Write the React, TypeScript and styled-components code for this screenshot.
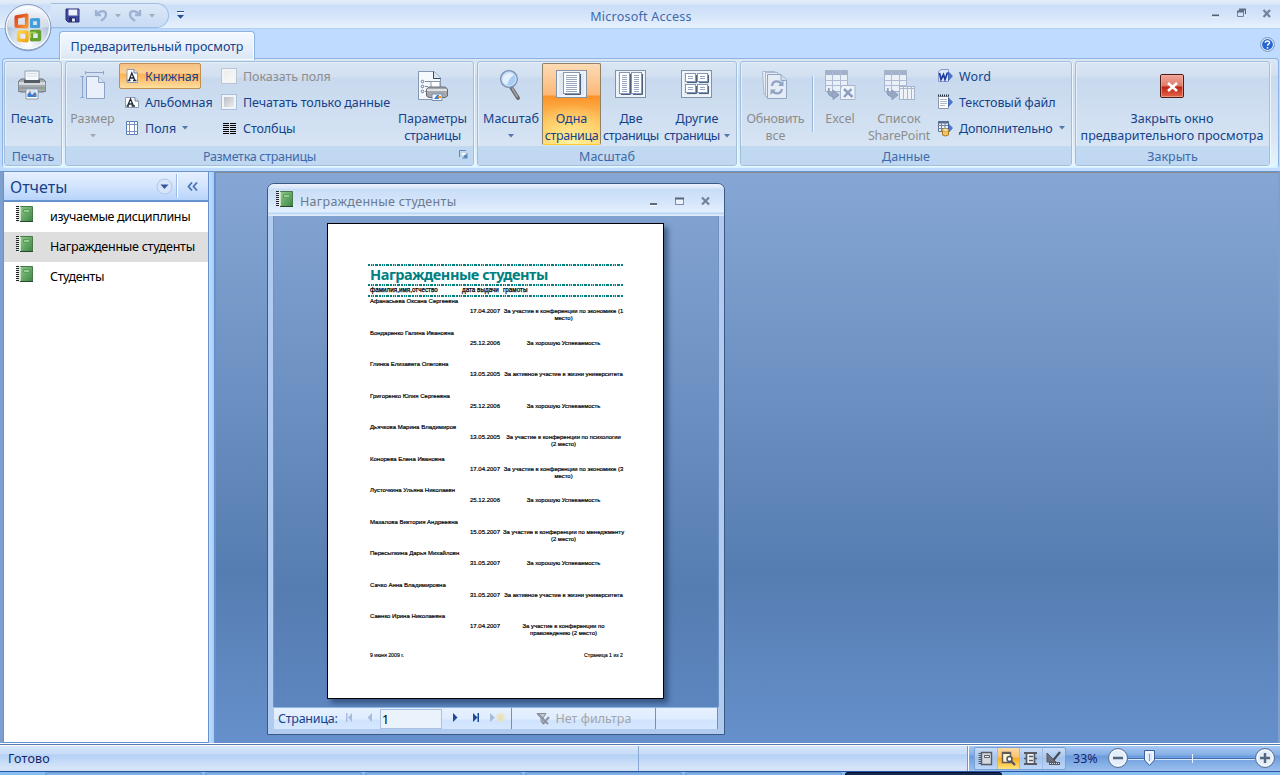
import React from "react";
import styled, { createGlobalStyle } from "styled-components";

const Global = createGlobalStyle`
  * { box-sizing: border-box; }
  body { margin: 0; overflow: hidden; font-family: "Noto Sans", "Open Sans", sans-serif; font-size: 12px; color: #15428b; }
  svg { display: block; flex: none; }
`;

const Screen = styled.div`
  width: 1280px; height: 775px; display: flex; flex-direction: column; position: relative;
  background: #bfdbff; overflow: hidden;
`;

/* Title bar */
const TitleBar = styled.header`
  height: 29px; flex: none; display: flex; align-items: stretch;
  background: linear-gradient(#e4edf9 0, #dbe7f7 4px, #cadef7 5px, #d3e3f9 14px, #e6f0fd 27px);
  border-bottom: 1px solid #b0d0fa;
`;
const QuickBar = styled.div`
  width: 118px; height: 25px; margin: 3px 0 0 51px; display: flex; align-items: center; padding-left: 14px; gap: 7px;
  border: 1px solid #9dbde4; border-left: 0; border-radius: 0 13px 13px 0;
  background: linear-gradient(#dce8f8, #c7dbf4);
`;
const QuickMore = styled.div` width: 24px; padding: 11px 0 0 8px; `;
const AppTitle = styled.h1`
  margin: 0; flex: 1; text-align: center; font-size: 12.5px; font-weight: 400; line-height: 33px;
  color: #3e6aaa; padding-right: 99px; letter-spacing: .25px;
`;
const WinButtons = styled.div` width: 92px; padding: 6px 0 0 23px; `;
const Orb = styled.div` position: absolute; left: 3px; top: 2px; `;

/* Tabs */
const TabStrip = styled.nav`
  height: 30px; flex: none; display: flex; justify-content: space-between; padding: 2px 5px 0 59px;
`;
const Tab = styled.div`
  width: 196px; height: 29px; border: 1px solid #8db2e3; border-bottom: 0; border-radius: 4px 4px 0 0;
  background: linear-gradient(#f5f9fe, #e6effa 60%, #dbe6f4); box-shadow: inset 0 0 0 1px #f8fdff;
  text-align: center; line-height: 29px; font-size: 12.5px; letter-spacing: -.07px; position: relative; z-index: 1;
`;
const HelpSlot = styled.div` padding-top: 6px; `;

/* Ribbon */
const Ribbon = styled.section`
  height: 110px; flex: none; margin: -1px 1px 0 2px; padding: 2px 0 0 1px; display: flex; gap: 3px;
  border: 1px solid #8db2e3; border-radius: 4px; border-bottom: 2px solid #d4f4ff;
  background: linear-gradient(#dce7f5 0, #d2e0f2 16px, #c9d9ee 17px, #d9e7f6 75%, #e2f6fd);
`;
const GroupBox = styled.div<{ $w: number }>`
  width: ${p => p.$w}px; height: 105px; flex: none; display: flex; flex-direction: column;
  border: 1px solid #a1bfdb; border-radius: 3px; box-shadow: 1px 1px 0 #eef7ff, inset 1px 1px 0 #e5eff9;
  background: linear-gradient(#dbe6f4 0, #d1dff0 15px, #c8d9ee 16px, #dae7f5);
  overflow: hidden;
`;
const GroupBody = styled.div` flex: 1; display: flex; align-items: flex-start; padding-top: 1px; `;
const GroupCaption = styled.div<{ $tight?: boolean }>`
  height: 19px; flex: none; text-align: center; background: linear-gradient(#c1d9f1, #bfd7f0);
  color: #3e6aaa; line-height: 21px; font-size: 12.5px; display: flex; letter-spacing: ${p => (p.$tight ? -.3 : 0)}px;
  span { flex: 1; padding-right: ${p => (p.$tight ? 6 : 0)}px; }
  svg { margin: 4px 5px 0 0; }
`;
const BigButton = styled.div<{ $w: number; $ml?: number; $off?: boolean; $active?: boolean }>`
  width: ${p => p.$w}px; margin-left: ${p => p.$ml ?? 0}px; height: 82px; flex: none;
  display: flex; flex-direction: column; align-items: center; padding-top: 7px;
  color: ${p => (p.$off ? "#8d8d8d" : "#15428b")};
  ${p => p.$active && `
    border: 1px solid #8e8165; border-bottom-color: #ffc82e; border-radius: 2px; padding-top: 6px;
    background: radial-gradient(ellipse 45px 40px at 50% 100%, #fff3a4 0, #ffe58aaa 50%, transparent 100%),
      linear-gradient(#fbdbb5 0, #feb778 31px, #fb9228 32px, #fdb24b 60%, #fed667);
  `}
`;
const BigIcon = styled.div<{ $drop?: number }>` height: 40px; flex: none; display: flex; align-items: flex-start; justify-content: center; padding-top: ${p => p.$drop ?? 0}px; `;
const BigLine = styled.div<{ $ls?: number }>`
  height: 17px; flex: none; line-height: 17px; font-size: 12.5px; white-space: nowrap; letter-spacing: ${p => p.$ls ?? 0}px;
  display: flex; align-items: center; justify-content: center; gap: 4px;
`;
const Column = styled.div<{ $w: number }>` width: ${p => p.$w}px; flex: none; `;
const SmallButton = styled.div<{ $active?: boolean; $off?: boolean; $w?: number; $gap?: number; $pad?: number; $ls?: number }>`
  height: 26px; width: ${p => (p.$w ? p.$w + "px" : "auto")}; display: flex; align-items: center; gap: ${p => p.$gap ?? 6}px;
  padding-left: ${p => p.$pad ?? 5}px; font-size: 12.5px; white-space: nowrap; letter-spacing: ${p => p.$ls ?? 0}px;
  color: ${p => (p.$off ? "#8d8d8d" : "#15428b")}; border: 1px solid transparent;
  ${p => p.$active && `border-color: #c08f4f; border-radius: 2px; background: linear-gradient(#f3c183 0, #fcd193 9px, #fdb251 10px, #fdd08a 20px, #fde0a0);`}
`;
const CheckBox = styled.div<{ $off?: boolean }>`
  width: 16px; height: 16px; flex: none; border: 1px solid ${p => (p.$off ? "#bcc5d0" : "#a9bfdf")};
  background: ${p => (p.$off ? "linear-gradient(135deg,#ebebeb,#fafafa)" : "linear-gradient(135deg,#b0b6be,#f5f5f5)")};
  box-shadow: inset 0 0 0 2px #f2f4f7;
`;
const Rule = styled.div` width: 2px; height: 56px; margin: 13px 0 0 2px; background: linear-gradient(90deg, #9ab6d8 50%, #eef6ff 50%); flex: none; `;

/* Body */
const Body = styled.main`
  height: 573px; flex: none; margin-top: 3px; display: flex; border-top: 1px solid #6d94c6; background: #7ea0d1;
  padding-left: 3px; border-bottom: 1px solid #fff;
`;
const NavPane = styled.aside`
  width: 206px; flex: none; display: flex; flex-direction: column; background: #fff;
  border: 1px solid #6593cf; border-top: 0;
`;
const NavHeader = styled.div`
  height: 30px; flex: none; display: flex; align-items: center; padding-left: 6px; font-size: 16px;
  background: linear-gradient(#e6f0ff, #d3e4fd 50%, #b8d4fb); border-bottom: 2px solid #6593cf;
  > span { width: 146px; line-height: 28px; height: 27px; }
  > i { width: 1px; height: 24px; margin: 0 10px 0 3px; background: #9cbce8; box-shadow: 1px 0 #fff; }
`;
const NavItem = styled.div<{ $on?: boolean; $ls: number }>`
  height: 30px; display: flex; padding-left: 12px; gap: 17px; font-size: 12.5px; color: #000; line-height: 29px;
  background: ${p => (p.$on ? "#dedede" : "#fff")}; white-space: nowrap; letter-spacing: ${p => p.$ls}px;
  svg { margin-top: 4px; }
`;
const Splitter = styled.div` width: 6px; flex: none; background: linear-gradient(90deg, #c5dcff, #a9ccfb); border-right: 1px solid #6593cf; `;
const Workspace = styled.div`
  flex: 1; margin-right: 2px; border: solid #8b8b8b; border-width: 1px 0 0 1px; padding: 10px 0 0 51px; display: flex; align-items: flex-start;
  background: linear-gradient(#86a7d5 0, #567db1 70%, #6690cb 100%);
`;

/* Report window */
const Win = styled.section`
  width: 458px; height: 552px; display: flex; flex-direction: column; border: 1px solid #3b5a82;
  border-radius: 7px 7px 0 0; background: #b1cbf0; overflow: hidden;
`;
const WinTitle = styled.div`
  height: 32px; flex: none; display: flex; padding: 7px 14px 0 8px; gap: 7px; color: #6b7a8f; line-height: 21px; font-size: 12.5px;
  background: linear-gradient(#e9f2fd 0, #dbe8fa 4px, #c8ddf7 5px, #d5e5fa 18px, #e3effe 28px, #b0d2f7 29px, #dfeafa 31px);
  > span { flex: 1; letter-spacing: .3px; }
  svg:last-child { margin-top: 4px; }
`;
const WinBody = styled.div`
  height: 491px; margin: 0 5px; flex: none; display: flex; justify-content: center; align-items: flex-start; padding-top: 7px;
  border: solid #6e93c4; border-width: 0 1px; padding-right: 1px;
  background: linear-gradient(#81a2d1 0, #567db1 76%, #5d86bf 100%);
`;
const Paper = styled.article`
  width: 337px; height: 476px; background: #fff; border: 1px solid #000; box-shadow: 4px 4px 5px #1d365c99;
  padding: 40px 38px 0 40px; color: #000; font: 6px/7px "Liberation Sans", sans-serif;
`;
const Dots = styled.div`
  height: 2px; width: 255px;
  background: repeating-linear-gradient(90deg, #008080 0 2px, #fff 2px 3px, #008080 3px 4px, #9fd0d0 4px 5px, #008080 5px 6px, #fff 6px 7px, #008080 7px 10px, #fff 10px 11px);
`;
const ReportTitle = styled.h2`
  margin: 0; height: 18px; padding-left: 2px; font: bold 14.5px/16px "Noto Sans", sans-serif; letter-spacing: -.46px; color: #008080; white-space: nowrap;
`;
const ReportHead = styled.div`
  height: 9px; padding-left: 2px; display: flex; font-size: 6.3px; line-height: 8px; -webkit-text-stroke: 0.25px #000; white-space: nowrap;
  span:nth-child(1) { width: 92px; } span:nth-child(2) { width: 41px; }
`;
const Records = styled.div` height: 354px; padding: 1px 0 0 2px; -webkit-text-stroke: 0.2px #000; `;
const Record = styled.div` height: 31.5px; white-space: nowrap; `;
const RecordLine = styled.div` display: flex; margin-top: 3px; `;
const DateCell = styled.span` width: 30px; margin-left: 100px; flex: none; `;
const Award = styled.span` width: 127px; font-size: 5.93px; text-align: center; white-space: pre; flex: none; `;
const ReportFoot = styled.div` display: flex; justify-content: space-between; padding: 1px 2px 0 2px; font-size: 5.2px; -webkit-text-stroke: 0.15px #000; `;

const PageNav = styled.div`
  height: 22px; flex: none; margin: 0 6px; display: flex; align-items: center; font-size: 12.5px; line-height: 22px;
  background: linear-gradient(#e6f1ff 0, #e0edff 11px, #d0e3fe 12px, #d6e7ff); border-top: 1px solid #8fb3e2; border-right: 1px solid #6593cf;
`;
const PageLabel = styled.span` padding-left: 4px; width: 70px; white-space: nowrap; letter-spacing: -.25px; `;
const PageInput = styled.div`
  width: 62px; height: 20px; border: 1px solid #a9c1e4; background: #eaf2fc; color: #000; padding-left: 1px; line-height: 19px; margin-right: 9px;
`;
const NoFilter = styled.div`
  width: 145px; height: 21px; border: solid #6593cf; border-width: 0 1px; display: flex; align-items: center; justify-content: center; gap: 5px; color: #a5a5a5;
`;

/* Status */
const StatusBar = styled.footer`
  height: 27px; flex: none; display: flex; border-top: 1px solid #fff; border-bottom: 1px solid #2a55a4;
  background: linear-gradient(#d7e6f9 0, #c7dcf8 8px, #b3d0f5 9px, #d7e5f7 22px, #cddff6);
`;
const StatusEdge = styled.div` height: 1px; flex: none; background: #567db1; `;
const Ready = styled.div` width: 639px; padding-left: 8px; font-size: 12.5px; line-height: 26px; letter-spacing: .2px; color: #15286b; border-right: 1px solid #8aa8d4; `;
const StatusFill = styled.div` width: 329px; border-right: 1px solid #7396cb; `;
const ViewPart = styled.div`
  flex: 1; display: flex; align-items: center; padding-left: 5px; border-left: 1px solid #fff;
  background: linear-gradient(#a6c8f4 0, #86aee5 9px, #6b9bdd 10px, #9cc0ee);
`;
const ViewSet = styled.div` width: 92px; height: 23px; display: flex; border: 1px solid #7ba0d4; border-radius: 2px; background: linear-gradient(#c9dcf5, #a6c4ec 50%, #bdd7f8); `;
const ViewButton = styled.div<{ $on?: boolean }>`
  width: 22.5px; display: flex; align-items: center; justify-content: center; border-right: 1px solid #9fbce4;
  &:last-child { border: 0; }
  background: ${p => (p.$on ? "linear-gradient(#fbdba7,#f9c068 45%,#ffa913 48%,#ffe57e)" : "none")};
`;
const Percent = styled.span` width: 41px; padding-left: 7px; font-size: 12.5px; line-height: 25px; color: #15286b; `;
const TaskBar = styled.div` flex: 1; display: flex; background: #86bff0; padding-left: 45px; gap: 3px; `;
const Task = styled.div<{ $on?: boolean }>` width: 157px; flex: none; background: ${p => (p.$on ? "#15284f" : "#7fb1ea")}; border: 1px solid ${p => (p.$on ? "#05102e" : "#6f97cb")}; border-bottom: 0; border-radius: 3px 3px 0 0; `;

/* Icons */
const Caret = ({ c = "#5377ae" }: { c?: string }) => (
  <svg width="6" height="4" viewBox="0 0 6 4"><path d="M0 0H6L3 3.500Z" fill={c} /></svg>
);

const OfficeOrb = () => (
  <svg width="50" height="50" viewBox="0 0 50 50">
    <defs>
      <radialGradient id="orb" cx=".5" cy=".9" r=".9"><stop offset="0" stopColor="#fff" /><stop offset=".45" stopColor="#cfdcec" /><stop offset=".75" stopColor="#a9b9d2" /><stop offset="1" stopColor="#f4f7fb" /></radialGradient>
      <linearGradient id="orbTop" x1="0" y1="0" x2="0" y2="1"><stop offset="0" stopColor="#fff" /><stop offset="1" stopColor="#d5deeb" /></linearGradient>
      <linearGradient id="og" x1="0" y1="0" x2="1" y2="1"><stop offset="0" stopColor="#d9401b" /><stop offset="1" stopColor="#f79632" /></linearGradient>
      <linearGradient id="yg" x1="0" y1="0" x2="1" y2="1"><stop offset="0" stopColor="#fbd64b" /><stop offset="1" stopColor="#f1a51b" /></linearGradient>
    </defs>
    <circle cx="25" cy="26" r="23.2" fill="#6883ab" opacity=".6" />
    <circle cx="25" cy="25.3" r="22.8" fill="#f5f9fe" stroke="#8298b9" strokeWidth="1" />
    <circle cx="25" cy="25.3" r="20.8" fill="url(#orb)" />
    <path d="M4.500 25A20.500 20.500 0 0 1 45.500 25Q25 28 4.500 25Z" fill="url(#orbTop)" opacity=".85" />
    <g fill="none" strokeLinejoin="round" strokeWidth="3">
      <path d="M28.500 17.800L35.500 17.500V24.500H28.500Z" stroke="#3f9fdc" strokeWidth="3.200" />
      <path d="M28.500 29.500H36.500V37.500L28.500 37.800Z" stroke="#64a02e" strokeWidth="3.400" />
      <path d="M27.500 36L27.500 30.500H33" stroke="#a9cf4b" strokeWidth="1.500" />
      <path d="M15.500 30H24V38.800L15.500 38Z" stroke="url(#yg)" strokeWidth="3.400" />
      <path d="M13.300 15L23.700 13.200V24.800L13.300 24.300Z" stroke="url(#og)" strokeWidth="3.600" />
    </g>
  </svg>
);
const SaveIcon = () => (
  <svg width="15" height="15" viewBox="0 0 15 15">
    <path d="M1 1H14V14H3L1 12Z" fill="#4149a4" stroke="#252c79" />
    <path d="M3.500 1.500H12V7.500H3.500Z" fill="#eef2fa" /><path d="M12 1.500H13.500V8H12Z" fill="#7079c5" />
    <path d="M4 9.500H11V14H4Z" fill="#252b63" /><path d="M7 10.500H10V13.500H7Z" fill="#e5e9f4" />
  </svg>
);
const UndoIcon = ({ flip }: { flip?: boolean }) => (
  <svg width="14" height="13" viewBox="0 0 14 13">
    <g transform={flip ? "translate(14 0) scale(-1 1)" : undefined} fill="none" stroke="#9db2d2" strokeWidth="2.300">
      <path d="M2 1V6H7" /><path d="M2.500 5.500C6 1 12 1 12 5.500C12 9 9 10 7 12" />
    </g>
  </svg>
);
const QuickGap = styled.i` width: 0; `;
const MoreIcon = () => (
  <svg width="7" height="8" viewBox="0 0 7 8"><path d="M0 .5H7" stroke="#24508f" /><path d="M0 4H7L3.500 7.800Z" fill="#24508f" /><path d="M1 1.500H7" stroke="#fff" /></svg>
);
const AppWinIcon = () => (
  <svg width="62" height="14" viewBox="0 0 62 14">
    <path d="M1 9.500H8" stroke="#546174" strokeWidth="2" /><path d="M1 11H8" stroke="#fff" />
    <g fill="none" stroke="#73849b"><path d="M28.500 3.500H34.500V8" stroke="#506077" /><path d="M26.500 6V10.500H32.500V6" /><path d="M26 5.500H33M28 3.500H35" strokeWidth="2" stroke="#5f6e83" /></g>
    <path d="M52.500 4L59 11M59 4L52.500 11" stroke="#71839c" strokeWidth="2.200" />
  </svg>
);
const DocWinIcon = () => (
  <svg width="60" height="12" viewBox="0 0 60 12">
    <path d="M0 9H7" stroke="#5c6a7c" strokeWidth="2" /><path d="M0 10.500H7" stroke="#fff" />
    <rect x="25.500" y="3.500" width="8" height="6" fill="#eaf2fd" stroke="#7790b4" /><path d="M25 3.500H34" stroke="#56667d" strokeWidth="2" />
    <path d="M52 2.500L59 9.500M59 2.500L52 9.500" stroke="#71839c" strokeWidth="2.200" />
  </svg>
);
const HelpIcon = () => (
  <svg width="15" height="15" viewBox="0 0 15 15">
    <circle cx="7.500" cy="7.500" r="6.900" fill="#e6f1ff" stroke="#7691bd" /><circle cx="7.500" cy="7.500" r="5.400" fill="#2766d2" />
    <path d="M5.300 5.800C5.300 3.200 9.700 3.300 9.500 5.700C9.400 7.200 7.500 7 7.500 8.800" fill="none" stroke="#fff" strokeWidth="1.500" /><circle cx="7.500" cy="10.800" r=".9" fill="#fff" />
  </svg>
);
const PrintIcon = () => (
  <svg width="28" height="30" viewBox="1 2 28 30">
    <path d="M8 3H22V14H8Z" fill="#f6f9fc" stroke="#92a0af" /><path d="M10 5.500H20M10 8H20" stroke="#d4dbe3" />
    <path d="M4 11H8V13H22V11H26L29 14V23L26 24H4L1 23V14Z" fill="#a6abb2" stroke="#6e747d" />
    <path d="M2 14H28V17H2Z" fill="#d5d8dc" /><path d="M7 12H23V15H7Z" fill="#555b65" /><path d="M2 20H28" stroke="#858b93" />
    <path d="M9 21H21V31H9Z" fill="#fff" stroke="#8b98a8" /><path d="M10.500 22H19.500V29H10.500Z" fill="#d3e5fa" />
    <path d="M10.500 29V26L13 24L15 27L18 24L19.500 26V29Z" fill="#3b7bd0" /><path d="M12 24H14M17 27H19" stroke="#d66e4a" /><circle cx="25.500" cy="20" r="1" fill="#6cc04c" />
  </svg>
);
const SizeIcon = () => (
  <svg width="26" height="30" viewBox="0 0 26 30">
    <g stroke="#8ea4c7" fill="none"><path d="M5 2.500H24M5.500 1V4.500M23.500 1V4.500M2.500 6V28M.5 6.500H4M.5 27.500H4" />
    <path d="M6.500 6.500H18.500L24.500 12.500V28.500H6.500Z" fill="#e9f0fa" stroke="#8ba1c9" /><path d="M18.500 6.500V12.500H24.500" fill="#d5e0f0" /></g>
  </svg>
);
const LetterPage = ({ wide }: { wide?: boolean }) => (
  <svg width="14" height="16" viewBox="0 0 14 16">
    {wide ? <path d="M.5 3.500H10L13.500 7V13.500H.5Z" fill="#fff" stroke="#8c9bb3" /> : <path d="M2 1.500H9L12.500 5V14.500H2Z" fill="#fff" stroke="#8c9bb3" />}
    {wide ? <path d="M10 3.500V7H13.500" fill="#dde5ef" stroke="#6f7f98" /> : <path d="M9 1.500V5H12.500" fill="#dde5ef" stroke="#6f7f98" />}
    <path d={wide ? "M2.500 12L5.500 5L8.500 12M3.500 10H8M1.500 12H4M6.500 12H10" : "M4 12.500L6.800 5L10 12.500M4.500 10H9M2.500 12.500H5.500M8 12.500H11.500"} fill="none" stroke="#222b3a" strokeWidth="1.300" />
  </svg>
);
const MarginsIcon = () => (
  <svg width="14" height="16" viewBox="0 0 14 16"><path d="M1.500 1.500H12.500V14.500H1.500Z" fill="#fff" stroke="#5b7cae" /><path d="M4.500 1V15M9.500 1V15M1 4.500H13M1 11.500H13" stroke="#7291c1" /></svg>
);
const ColumnsIcon = () => (
  <svg width="14" height="12" viewBox="0 0 14 12"><path d="M1 1.500H7M8 1.500H14M1 3.500H7M8 3.500H14M1 5.500H7M8 5.500H14M1 7.500H7M8 7.500H14M1 9.500H7M8 9.500H14M1 11.500H7M8 11.500H14" stroke="#000" /></svg>
);
const PageSetupIcon = () => (
  <svg width="32" height="32" viewBox="0 0 32 32">
    <path d="M1.500 1.500H17L23.500 8V29.500H1.500Z" fill="#f5f9fe" stroke="#8397b4" /><path d="M16.500 1.500V8.500H23.500" fill="#dbe6f4" stroke="#33465f" />
    <g fill="#fff" stroke="#5c7597"><circle cx="5.500" cy="11.500" r="1.300" /><circle cx="5.500" cy="16.500" r="1.300" /><circle cx="5.500" cy="21.500" r="1.300" /></g>
    <path d="M8 11.500H14M8 16.500H11M8 21.500H9" stroke="#7b8da8" />
    <path d="M14 11.500H23V20H14Z" fill="#fff" stroke="#8a97a8" /><path d="M9.500 19L12 17H28L30.500 19V26L28 27.500H12L9.500 26Z" fill="#a4a8ae" stroke="#666d77" />
    <path d="M10 20H30" stroke="#dfe2e6" strokeWidth="2" /><path d="M15 24H25V30.500H15Z" fill="#f2f8ff" stroke="#7c8ea6" /><path d="M17 29L20 25H22V29Z" fill="#3b7bd0" /><path d="M21 27H24" stroke="#e09a40" strokeWidth="2" />
  </svg>
);
const LauncherIcon = () => (
  <svg width="9" height="9" viewBox="0 0 9 9"><path d="M.5 7V.5H7" fill="none" stroke="#5f87b7" /><path d="M8.500 3V8.500H3Z" fill="#5f87b7" /><path d="M3 3L7 7" stroke="#5f87b7" /><path d="M3 3H6V5H3Z" fill="#fff" /></svg>
);
const MagnifierIcon = () => (
  <svg width="22" height="32" viewBox="1 1 22 32">
    <path d="M12 18L19 29" stroke="#6c6a6c" strokeWidth="4" strokeLinecap="round" /><path d="M13 19L18.500 28" stroke="#a4a5a9" strokeWidth="1.500" />
    <circle cx="10" cy="10" r="8.300" fill="#a9ccf2" stroke="#8195b8" strokeWidth="1.500" /><path d="M3.500 10C4 4 12 2 15 6C12 7 9 13 8 16C5 15 3.500 13 3.500 10Z" fill="#e2f0fd" /><circle cx="10" cy="10" r="7" fill="none" stroke="#d4e6fa" />
  </svg>
);
const PagesIcon = ({ kind }: { kind: 1 | 2 | 4 }) => {
  const pages = kind === 1 ? [[8, 3, 16, 21]] : kind === 2 ? [[5, 3, 10, 21], [17, 3, 10, 21]] : [[5, 4, 10, 8], [17, 4, 10, 8], [5, 15, 10, 8], [17, 15, 10, 8]];
  return (
    <svg width="32" height="28" viewBox="0 0 32 28">
      <rect x=".5" y=".5" width="30" height="27" fill="#dfe8f3" stroke="#8292a8" /><rect x="2" y="2" width="27" height="24" fill="none" stroke="#fff" />
      {pages.map(([x, y, w, h], i) => (
        <g key={i}>
          <path d={`M${x + w + .5} ${y + 1}V${y + h + .5}H${x + 1}`} fill="none" stroke="#4c617f" />
          <rect x={x - .5} y={y - .5} width={w} height={h} fill="#fff" stroke="#8497b3" />
          {Array.from({ length: Math.floor((h - 3) / 2) }, (_, k) => <path key={k} d={`M${x + 2} ${y + 2.500 + k * 2}H${x + w - 3}`} stroke="#98a6bd" />)}
        </g>
      ))}
    </svg>
  );
};
const RefreshIcon = () => (
  <svg width="28" height="32" viewBox="1 2 28 32">
    <g fill="#e5ecf6" stroke="#a9b9d1"><path d="M1.500 3.500H14V26.500H3Z" /><path d="M4.500 4.500H17V28.500H4.500Z" /><path d="M6.500 6.500H20L25.500 12V30.500H6.500Z" stroke="#91a5c5" /></g>
    <path d="M20 6.500V12.500H25.500" fill="#d3ddeb" stroke="#91a5c5" />
    <path d="M11 18C11.500 12.500 18 12 20.500 16M21 21C20 26.500 14 26.500 11.500 23" fill="none" stroke="#8fa3c4" strokeWidth="2.300" /><path d="M22.500 12.500V18H17ZM9.500 27V21.500H15Z" fill="#8fa3c4" />
  </svg>
);
const TableExport = ({ kind }: { kind: "x" | "s" }) => (
  <svg width="32" height="33" viewBox="0 2 32 33">
    <path d="M1.500 2.500H23.500V23.500H1.500Z" fill="#eaf0f8" stroke="#a5b5cf" /><path d="M1.500 2.500H23.500V7H1.500Z" fill="#a3b1ca" /><path d="M8.500 3V23M16.500 3V23M1 12.500H24M1 17.500H24" stroke="#adbcd4" />
    <path d="M5 20C5 24 6 25 9 25V22L15 27L9 31.500V28.500C4 28 3 25 5 20Z" fill="#9aa9c3" stroke="#8496b4" />
    {kind === "x" ? <g><path d="M18.500 17.500H31V31.500H16.500V20Z" fill="#eef3fa" stroke="#a4b4cf" /><path d="M20 21L28.500 29M27.500 21L20 29" stroke="#8c9ebf" strokeWidth="2.500" /></g>
      : <g><rect x="16.500" y="18.500" width="15" height="13" fill="#eef3fa" stroke="#a4b4cf" /><path d="M16 20.500H32M20.500 19V31M24.500 19V31M28.500 19V31" stroke="#a9b8d1" /></g>}
  </svg>
);
const ExportArrow = () => <path d="M11.500 4L15.500 8L11.500 12.500Z" fill="#4b78d1" stroke="#2450a6" strokeWidth=".6" />;
const WordIcon = () => (
  <svg width="16" height="16" viewBox="0 0 16 16"><path d="M1.500 3.500L4 1.500H11.500V13.500H1.500Z" fill="#dfe8fb" stroke="#8799c9" /><path d="M2.500 5L4 11.500L6.500 6.500L8 11.500L10.500 4.500" fill="none" stroke="#1c3ca0" strokeWidth="1.700" /><ExportArrow /></svg>
);
const TextIcon = () => (
  <svg width="16" height="16" viewBox="0 0 16 16"><path d="M1.500 2.500H11.500V14.500H1.500Z" fill="#fff" stroke="#8b98ae" /><path d="M1 1.500H12" stroke="#222c3e" strokeWidth="2" strokeDasharray="1 1" /><path d="M3 5.500H10M3 7.500H10M3 9.500H10M3 11.500H8" stroke="#b0bac9" /><ExportArrow /></svg>
);
const MoreExportIcon = () => (
  <svg width="16" height="17" viewBox="0 0 16 17"><path d="M1.500 1.500H11.500V11.500H1.500Z" fill="#eef3fa" stroke="#5d718f" /><path d="M1 2.500H12" stroke="#54698a" strokeWidth="2" /><path d="M4.500 2V11M8 2V11M1 5.500H11M1 8.500H11" stroke="#6e819d" /><ExportArrow /><path d="M5.500 10V15Q8.500 17 11.500 15V10Z" fill="#f3c664" stroke="#a97722" /><ellipse cx="8.500" cy="10" rx="3" ry="1.500" fill="#ffe8ae" stroke="#b98a35" strokeWidth=".7" /></svg>
);
const CloseIcon = () => (
  <svg width="24" height="24" viewBox="0 0 24 24">
    <defs><linearGradient id="red" x1="0" y1="0" x2="0" y2="1"><stop offset="0" stopColor="#f4a79b" /><stop offset=".5" stopColor="#dc7a69" /><stop offset=".54" stopColor="#bb2512" /><stop offset="1" stopColor="#e9674d" /></linearGradient></defs>
    <rect x=".5" y=".5" width="23" height="23" rx="1.500" fill="url(#red)" stroke="#4c1c19" /><rect x="1.500" y="1.500" width="21" height="21" fill="none" stroke="#f5b3a4" opacity=".6" />
    <path d="M8 9L17 17M17 9L8 17" stroke="#fff" strokeWidth="2.600" />
  </svg>
);
const ReportIcon = () => (
  <svg width="17" height="17" viewBox="0 0 17 17">
    <defs><linearGradient id="book" x1="0" y1="0" x2="1" y2="1"><stop offset="0" stopColor="#8dcb86" /><stop offset="1" stopColor="#3d8546" /></linearGradient></defs>
    <path d="M4.500 .5H16.500V15.500H4.500Z" fill="url(#book)" stroke="#47774a" /><path d="M3.500 15.500H17" stroke="#26472a" /><path d="M7.500 3.500H13.500V6.500H7.500Z" fill="#93cd8e" stroke="#5c9a5e" />
    <path d="M2.500 0V16" stroke="#e9ecef" strokeWidth="3" /><path d="M1.500 0V16" stroke="#1f2422" strokeWidth="3" strokeDasharray="1 1" /><path d="M4.500 1V15" stroke="#cfe3ce" />
  </svg>
);
const RoundArrow = () => (
  <svg width="17" height="17" viewBox="0 0 17 17"><circle cx="8.500" cy="8.500" r="7.500" fill="#d8e5f8" stroke="#b1c6e5" /><path d="M4.500 6.500H12.500L8.500 11Z" fill="#34569c" /></svg>
);
const Chevrons = () => <svg width="11" height="9" viewBox="0 0 11 9"><path d="M5 .5L1.500 4.500L5 8.500M10 .5L6.500 4.500L10 8.500" fill="none" stroke="#4b75b4" strokeWidth="1.800" /></svg>;
const NavArrow = ({ kind }: { kind: "first" | "prev" | "next" | "last" | "new" }) => {
  const c = kind === "next" || kind === "last" ? "#1c4a97" : "#a8bddd";
  const w = kind === "prev" ? 15 : kind === "new" ? 18 : 21;
  return (
    <svg width={w} height="13" viewBox={`0 0 ${w} 13`} overflow="visible">
      {kind === "first" && <path d="M2 1H3.500V10H2ZM8 1V10L4 5.500Z" fill={c} />}
      {kind === "prev" && <path d="M7 1V10L2.500 5.500Z" fill={c} />}
      {kind === "next" && <path d="M2 1V10L6.500 5.500Z" fill={c} />}
      {kind === "last" && <path d="M1 1V10L5.500 5.500ZM5.500 1H7V10H5.500Z" fill={c} />}
      {kind === "new" && <g transform="translate(-3)"><path d="M0 1V10L5 5.500Z" fill={c} /><path d="M7 2L14 9M14 2L7 9M10.500 1V10M6 5.500H15" stroke="#eadfb5" strokeWidth="1.500" /></g>}
    </svg>
  );
};
const FilterIcon = () => (
  <svg width="15" height="14" viewBox="0 0 15 14"><path d="M1 1.500H10L7 6V12L5 9V6Z" fill="#c0c6d0" stroke="#868c98" /><path d="M2 2L12 12M13 5L7 12" stroke="#8d939f" strokeWidth="2" /></svg>
);
const ViewIcon = ({ n }: { n: number }) => (
  <svg width="15" height="15" viewBox="0 0 15 15">
    {n === 0 && <g><path d="M3.500 1.500H13.500V13.500H3.500Z" fill="#d2d8e0" stroke="#565b63" strokeWidth="1.400" /><path d="M6.500 4.500H11.500V6.500H6.500Z" fill="#fff" stroke="#565b63" /><path d="M2 2V14" stroke="#565b63" strokeWidth="3" strokeDasharray="1 1" /></g>}
    {n === 1 && <g><path d="M1.500 1.500H9.500V11.500H1.500Z" fill="#fff2d1" stroke="#635b50" strokeWidth="1.400" /><path d="M1 2H10" stroke="#635b50" strokeWidth="2" /><circle cx="8.500" cy="8" r="2.500" fill="#fff" stroke="#4d5564" strokeWidth="1.500" /><path d="M10 10L14 14" stroke="#4d5564" strokeWidth="2.200" /></g>}
    {n === 2 && <g><path d="M3 1H12V14H3Z" fill="#eef2f7" /><path d="M1 2H14M1 13H14" stroke="#565b63" strokeWidth="2" /><path d="M3.500 3V12M11.500 3V12M1 7.500H4M11 7.500H14M6 5.500H10M6 9.500H10" stroke="#565b63" strokeWidth="1.700" /></g>}
    {n === 3 && <g><path d="M1 2V11H10Z" fill="#6c7179" stroke="#565b63" /><path d="M14 1L7.500 9" stroke="#454b55" strokeWidth="2.200" /><path d="M3 12.500H14" stroke="#565b63" strokeWidth="3" /><path d="M4 12.500H13" stroke="#dbe2ec" strokeDasharray="1 1" /></g>}
  </svg>
);
const ZoomSlider = () => (
  <svg width="169" height="23" viewBox="0 0 169 23">
    <path d="M21 11.500H148" stroke="#3f6cb2" /><path d="M21 12.500H148" stroke="#d8e8fb" /><path d="M85.500 7V16" stroke="#e8f2ff" />
    {[11, 158].map(x => <g key={x}><circle cx={x} cy="11" r="9.500" fill="#c4d9f1" stroke="#5c7291" /><circle cx={x} cy="11" r="8" fill="#e3eefa" stroke="#fff" /></g>)}
    <path d="M6 11H16M153 11H163M158 6V16" stroke="#53657f" strokeWidth="2.400" />
    <path d="M37.500 3.500H47.500V13L42.500 18.500L37.500 13Z" fill="#dceafc" stroke="#3d639d" /><path d="M39 5H46V12.500L42.500 16.500L39 12.500Z" fill="none" stroke="#fff" /><path d="M42.500 7V14" stroke="#7f9cc6" />
  </svg>
);

const conf = "За участие в конференции по ";
const records: [string, string, string][] = [
  ["Афанасьева Оксана Сергеевна", "17.04.2007", conf + "экономике (1\nместо)"],
  ["Бондаренко Галина Ивановна", "25.12.2006", "За хорошую Успеваемость"],
  ["Глинка Елизавета Олеговна", "13.05.2005", "За активное участие в жизни университета"],
  ["Григоренко Юлия Сергеевна", "25.12.2006", "За хорошую Успеваемость"],
  ["Дьячкова Марина Владимиров", "13.05.2005", conf + "психологии\n(2 место)"],
  ["Конорева Елена Ивановна", "17.04.2007", conf + "экономике (3\nместо)"],
  ["Лусточкина Ульяна Николаевн", "25.12.2006", "За хорошую Успеваемость"],
  ["Мазалова Виктория Андреевна", "15.05.2007", conf + "менеджменту\n(2 место)"],
  ["Пересыпкина Дарья Михайловн", "31.05.2007", "За хорошую Успеваемость"],
  ["Сачко Анна Владимировна", "31.05.2007", "За активное участие в жизни университета"],
  ["Саенко Ирина Николаевна", "17.04.2007", "За участие в конференции по\nправоведению (2 место)"],
];

const Group = ({ w, title, launcher, children }: { w: number; title: string; launcher?: boolean; children: React.ReactNode }) => (
  <GroupBox $w={w}><GroupBody>{children}</GroupBody><GroupCaption $tight={launcher}><span>{title}</span>{launcher && <LauncherIcon />}</GroupCaption></GroupBox>
);

export default function App() {
  return (
    <Screen>
      <Global />
      <TitleBar>
        <QuickBar><SaveIcon /><QuickGap /><UndoIcon /><Caret c="#a3adba" /><UndoIcon flip /><Caret c="#a3adba" /></QuickBar>
        <QuickMore><MoreIcon /></QuickMore>
        <AppTitle>Microsoft Access</AppTitle>
        <WinButtons><AppWinIcon /></WinButtons>
      </TitleBar>
      <Orb><OfficeOrb /></Orb>
      <TabStrip><Tab>Предварительный просмотр</Tab><HelpSlot><HelpIcon /></HelpSlot></TabStrip>
      <Ribbon>
        <Group w={58} title="Печать">
          <BigButton $w={54}><BigIcon><PrintIcon /></BigIcon><BigLine>Печать</BigLine></BigButton>
        </Group>
        <Group w={409} title="Разметка страницы" launcher>
          <BigButton $w={53} $off><BigIcon><SizeIcon /></BigIcon><BigLine>Размер</BigLine><BigLine><Caret c="#a3a9b0" /></BigLine></BigButton>
          <Column $w={101}>
            <SmallButton $active $w={82} $ls={-.15}><LetterPage />Книжная</SmallButton>
            <SmallButton $ls={-.1}><LetterPage wide />Альбомная</SmallButton>
            <SmallButton><MarginsIcon />Поля<Caret /></SmallButton>
          </Column>
          <Column $w={176}>
            <SmallButton $off $pad={0} $ls={-.05}><CheckBox $off />Показать поля</SmallButton>
            <SmallButton $pad={0} $ls={-.1}><CheckBox />Печатать только данные</SmallButton>
            <SmallButton $pad={1} $gap={7} $ls={-.1}><ColumnsIcon />Столбцы</SmallButton>
          </Column>
          <BigButton $w={73}><BigIcon><PageSetupIcon /></BigIcon><BigLine $ls={-.1}>Параметры</BigLine><BigLine $ls={-.3}>страницы</BigLine></BigButton>
        </Group>
        <Group w={260} title="Масштаб">
          <BigButton $w={58} $ml={4}><BigIcon><MagnifierIcon /></BigIcon><BigLine>Масштаб</BigLine><BigLine><Caret /></BigLine></BigButton>
          <BigButton $w={59} $ml={2} $active><BigIcon><PagesIcon kind={1} /></BigIcon><BigLine>Одна</BigLine><BigLine $ls={-.4}>страница</BigLine></BigButton>
          <BigButton $w={60}><BigIcon><PagesIcon kind={2} /></BigIcon><BigLine>Две</BigLine><BigLine $ls={-.4}>страницы</BigLine></BigButton>
          <BigButton $w={72}><BigIcon><PagesIcon kind={4} /></BigIcon><BigLine>Другие</BigLine><BigLine $ls={-.4}>страницы<Caret /></BigLine></BigButton>
        </Group>
        <Group w={332} title="Данные">
          <BigButton $w={69} $off><BigIcon><RefreshIcon /></BigIcon><BigLine $ls={-.2}>Обновить</BigLine><BigLine>все</BigLine></BigButton>
          <Rule />
          <BigButton $w={52} $off><BigIcon><TableExport kind="x" /></BigIcon><BigLine>Excel</BigLine></BigButton>
          <BigButton $w={66} $off><BigIcon><TableExport kind="s" /></BigIcon><BigLine>Список</BigLine><BigLine $ls={-.2}>SharePoint</BigLine></BigButton>
          <Column $w={130}>
            <SmallButton $pad={4} $ls={.1}><WordIcon />Word</SmallButton>
            <SmallButton $pad={4} $ls={-.1}><TextIcon />Текстовый файл</SmallButton>
            <SmallButton $pad={4} $ls={-.2}><MoreExportIcon />Дополнительно<Caret /></SmallButton>
          </Column>
        </Group>
        <Group w={195} title="Закрыть">
          <BigButton $w={192}><BigIcon $drop={4}><CloseIcon /></BigIcon><BigLine>Закрыть окно</BigLine><BigLine>предварительного просмотра</BigLine></BigButton>
        </Group>
      </Ribbon>
      <Body>
        <NavPane>
          <NavHeader><span>Отчеты</span><RoundArrow /><i /><Chevrons /></NavHeader>
          <NavItem $ls={-.35}><ReportIcon />изучаемые дисциплины</NavItem>
          <NavItem $on $ls={-.25}><ReportIcon />Награжденные студенты</NavItem>
          <NavItem $ls={-.35}><ReportIcon />Студенты</NavItem>
        </NavPane>
        <Splitter />
        <Workspace>
          <Win>
            <WinTitle><ReportIcon /><span>Награжденные студенты</span><DocWinIcon /></WinTitle>
            <WinBody>
              <Paper>
                <Dots />
                <ReportTitle>Награжденные студенты</ReportTitle>
                <Dots />
                <ReportHead><span>фамилия,имя,отчество</span><span>дата выдачи</span><span>грамоты</span></ReportHead>
                <Dots />
                <Records>
                  {records.map(([name, date, award]) => (
                    <Record key={name}>{name}<RecordLine><DateCell>{date}</DateCell><Award>{award}</Award></RecordLine></Record>
                  ))}
                </Records>
                <ReportFoot><span>9 июня 2009 г.</span><span>Страница 1 из 2</span></ReportFoot>
              </Paper>
            </WinBody>
            <PageNav>
              <PageLabel>Страница:</PageLabel><NavArrow kind="first" /><NavArrow kind="prev" />
              <PageInput>1</PageInput>
              <NavArrow kind="next" /><NavArrow kind="last" /><NavArrow kind="new" />
              <NoFilter><FilterIcon />Нет фильтра</NoFilter>
            </PageNav>
          </Win>
        </Workspace>
      </Body>
      <StatusEdge />
      <StatusBar>
        <Ready>Готово</Ready><StatusFill />
        <ViewPart>
          <ViewSet>{[0, 1, 2, 3].map(n => <ViewButton key={n} $on={n === 1}><ViewIcon n={n} /></ViewButton>)}</ViewSet>
          <Percent>33%</Percent><ZoomSlider />
        </ViewPart>
      </StatusBar>
      <TaskBar><Task /><Task /><Task /><Task /><Task /><Task $on /></TaskBar>
    </Screen>
  );
}
